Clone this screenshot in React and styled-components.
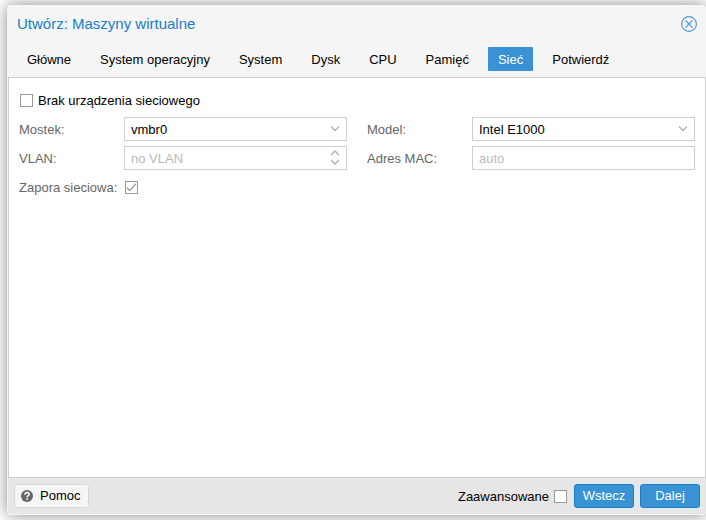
import React, { useState } from "react";
import styled, { createGlobalStyle, css } from "styled-components";

const GlobalStyle = createGlobalStyle`
  *, *::before, *::after { box-sizing: border-box; }
  body {
    margin: 0;
    background: #fff;
    color: #000;
    font: 13px/17px "Liberation Sans", Arial, Helvetica, sans-serif;
    overflow: hidden;
  }
  button, input, select { font: inherit; margin: 0; }
`;

const Page = styled.div`
  display: flex;
  min-height: 100vh;
  padding: 5px 0 5px 7px;
`;

const Window = styled.section`
  display: flex;
  flex: 1;
  flex-direction: column;
  min-width: 0;
  padding: 1px;
  padding-right: 0;
  border-radius: 4px;
  background: #f5f5f5;
  box-shadow: 0 0 16px #888;
`;

const TitleBar = styled.header`
  display: flex;
  align-items: center;
  justify-content: space-between;
  height: 35px;
  padding: 0 9px;
`;

const Title = styled.h1`
  margin: 0;
  color: #157fcc;
  font-size: 15px;
  font-weight: 400;
`;

const CloseButton = styled.button`
  display: flex;
  padding: 0;
  border: 0;
  background: none;
  color: #4f96d0;
  cursor: pointer;
`;

const TabBar = styled.nav`
  display: flex;
  gap: 9px;
  padding: 6px 9px;
`;

const Tab = styled.button`
  height: 24px;
  padding: 0 10px;
  border: 0;
  border-radius: 1px;
  background: ${(p) => (p.$active ? "#3892d4" : "transparent")};
  color: ${(p) => (p.$active ? "#fff" : "#000")};
  white-space: nowrap;
  cursor: pointer;
`;

const Body = styled.main`
  display: flex;
  flex: 1;
  flex-direction: column;
  gap: 5px;
  padding: 10px;
  border: 1px solid #cfcfcf;
  background: #fff;
`;

const Columns = styled.div`
  display: grid;
  grid-template-columns: 1fr 1fr;
  gap: 5px 20px;
`;

const Row = styled.div`
  display: flex;
  align-items: center;
  min-width: 0;
  height: 24px;
`;

const CheckRow = styled.label`
  display: flex;
  align-items: center;
  gap: 5px;
  height: 24px;
  padding-left: 1px;
`;

const Label = styled.label`
  flex: 0 0 105px;
  color: #666;
  white-space: nowrap;
`;

const Control = styled.div`
  position: relative;
  flex: 1;
  min-width: 0;
  height: 24px;
`;

const fieldStyle = css`
  display: block;
  width: 100%;
  height: 24px;
  padding: 0 6px;
  border: 1px solid #cfcfcf;
  border-radius: 0;
  background: #fff;
  color: #000;
  outline: none;
  appearance: none;
`;

const Select = styled.select`
  ${fieldStyle}
`;

const TextInput = styled.input`
  ${fieldStyle}
  &::placeholder {
    color: #b8b8b8;
    opacity: 1;
  }
`;

const Trigger = styled.svg`
  position: absolute;
  top: 1px;
  right: 1px;
  width: 22px;
  height: 22px;
  fill: none;
  stroke: #b0b0b0;
  stroke-width: 1.3;
  pointer-events: none;
`;

const CheckFrame = styled.span`
  display: grid;
  flex: none;
  width: 13px;
  height: 13px;
  & > * { grid-area: 1 / 1; }
`;

const CheckInput = styled.input`
  width: 13px;
  height: 13px;
  border: 1px solid #999;
  background: #fff;
  appearance: none;
  & + svg { visibility: hidden; pointer-events: none; }
  &:checked + svg { visibility: visible; }
`;

const CheckCell = styled.div`
  padding-left: 1px;
`;

const Footer = styled.footer`
  display: flex;
  align-items: center;
  gap: 6px;
  height: 36px;
  padding: 0 6px;
  border-radius: 0 0 3px 3px;
  background: #e6e6e6;
`;

const HelpButton = styled.button`
  display: flex;
  align-items: center;
  gap: 7px;
  height: 24px;
  margin-right: auto;
  padding: 0 8px 0 6px;
  border: 1px solid #d8d8d8;
  border-radius: 3px;
  background: #f5f5f5;
  color: #000;
  line-height: 16px;
  cursor: pointer;
`;

const Advanced = styled.label`
  display: flex;
  align-items: center;
  gap: 5px;
  padding-right: 1px;
`;

const ActionButton = styled.button`
  width: 60px;
  height: 24px;
  padding: 0;
  border: 1px solid #157fcc;
  border-radius: 3px;
  background: #3892d4;
  color: #fff;
  line-height: 16px;
  cursor: pointer;
`;

const tabs = [
  "Główne",
  "System operacyjny",
  "System",
  "Dysk",
  "CPU",
  "Pamięć",
  "Sieć",
  "Potwierdź",
];

function Checkbox(props) {
  return (
    <CheckFrame>
      <CheckInput type="checkbox" {...props} />
      <svg width="13" height="13" viewBox="0 0 13 13" fill="none" stroke="#999" strokeWidth="1.4">
        <path d="M2 6.8 4.800 9.600 11 2.800" />
      </svg>
    </CheckFrame>
  );
}

function ComboBox({ id, value }) {
  return (
    <Control>
      <Select id={id} defaultValue={value}>
        <option>{value}</option>
      </Select>
      <Trigger viewBox="0 0 22 22">
        <path d="M7 8.500 11 12.500 15 8.500" />
      </Trigger>
    </Control>
  );
}

export default function App() {
  const [active, setActive] = useState("Sieć");
  return (
    <>
      <GlobalStyle />
      <Page>
        <Window>
          <TitleBar>
            <Title>Utwórz: Maszyny wirtualne</Title>
            <CloseButton aria-label="Zamknij">
              <svg width="16" height="16" viewBox="0 0 16 16" fill="none" stroke="currentColor">
                <circle cx="8" cy="8" r="7.4" strokeWidth="1.1" />
                <path d="M4.500 4.500 11.500 11.500M11.500 4.500 4.500 11.500" strokeWidth="1.1" />
              </svg>
            </CloseButton>
          </TitleBar>
          <TabBar>
            {tabs.map((name) => (
              <Tab key={name} $active={name === active} onClick={() => setActive(name)}>
                {name}
              </Tab>
            ))}
          </TabBar>
          <Body>
            <CheckRow>
              <Checkbox />
              Brak urządzenia sieciowego
            </CheckRow>
            <Columns>
              <Row>
                <Label htmlFor="bridge">Mostek:</Label>
                <ComboBox id="bridge" value="vmbr0" />
              </Row>
              <Row>
                <Label htmlFor="model">Model:</Label>
                <ComboBox id="model" value="Intel E1000" />
              </Row>
              <Row>
                <Label htmlFor="vlan">VLAN:</Label>
                <Control>
                  <TextInput id="vlan" placeholder="no VLAN" inputMode="numeric" />
                  <Trigger viewBox="0 0 22 22">
                    <path d="M7 8 11 4 15 8M7 13 11 17 15 13" />
                  </Trigger>
                </Control>
              </Row>
              <Row>
                <Label htmlFor="mac">Adres MAC:</Label>
                <Control>
                  <TextInput id="mac" placeholder="auto" />
                </Control>
              </Row>
              <Row>
                <Label htmlFor="firewall">Zapora sieciowa:</Label>
                <CheckCell>
                  <Checkbox id="firewall" defaultChecked />
                </CheckCell>
              </Row>
            </Columns>
          </Body>
          <Footer>
            <HelpButton>
              <svg width="12" height="12" viewBox="0 0 12 12" fill="none">
                <circle cx="6" cy="6" r="6" fill="#666" />
                <path d="M3.900 4.700C4 3.100 5 2.600 6 2.600c1.200 0 2.100.7 2.100 1.800C8.100 5.700 6.100 5.700 6.100 7.200" stroke="#f5f5f5" strokeWidth="1.6" />
                <path d="M5.200 8.200h1.800v1.600H5.200z" fill="#f5f5f5" />
              </svg>
              Pomoc
            </HelpButton>
            <Advanced>
              Zaawansowane
              <Checkbox />
            </Advanced>
            <ActionButton>Wstecz</ActionButton>
            <ActionButton>Dalej</ActionButton>
          </Footer>
        </Window>
      </Page>
    </>
  );
}
